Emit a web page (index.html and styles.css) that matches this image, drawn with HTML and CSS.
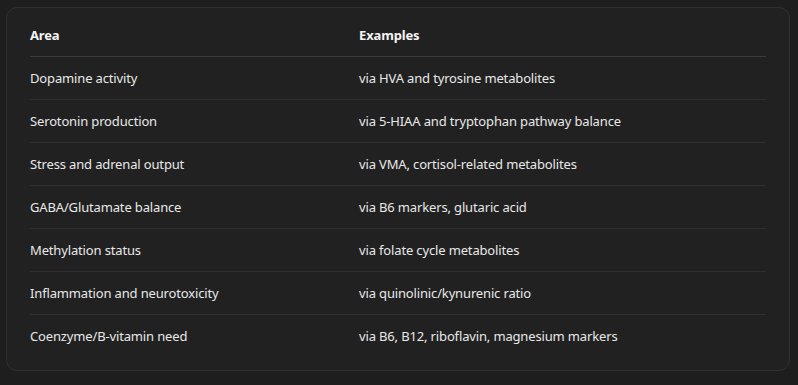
FILE: index.html
```html
<!DOCTYPE html>
<html lang="en">
<head>
<meta charset="utf-8">
<link rel="stylesheet" href="styles.css">
</head>
<body>
<div class="card">
  <table class="tbl">
    <thead>
      <tr><th>Area</th><th>Examples</th></tr>
    </thead>
    <tbody>
      <tr><td>Dopamine activity</td><td>via HVA and tyrosine metabolites</td></tr>
      <tr><td>Serotonin production</td><td>via 5-HIAA and tryptophan pathway balance</td></tr>
      <tr><td>Stress and adrenal output</td><td>via VMA, cortisol-related metabolites</td></tr>
      <tr><td>GABA/Glutamate balance</td><td>via B6 markers, glutaric acid</td></tr>
      <tr><td>Methylation status</td><td>via folate cycle metabolites</td></tr>
      <tr><td>Inflammation and neurotoxicity</td><td>via quinolinic/kynurenic ratio</td></tr>
      <tr><td>Coenzyme/B-vitamin need</td><td>via B6, B12, riboflavin, magnesium markers</td></tr>
    </tbody>
  </table>
</div>
</body>
</html>
```

FILE: styles.css
```css
html, body {
  margin: 0;
  padding: 0;
  background: #1e1e1e;
}
body {
  padding: 7px 8px 13px 6px;
  font-family: "Noto Sans", "Open Sans", sans-serif;
  color: #e8e8e8;
}
.card {
  background: #212121;
  border: 1px solid #303030;
  border-radius: 11px;
  padding: 12px 23px 12px 23px;
  height: 364px;
  box-sizing: border-box;
}
.tbl {
  width: 100%;
  border-collapse: collapse;
  font-size: 13px;
  letter-spacing: -0.15px;
}
.tbl th {
  text-align: left;
  font-weight: 700;
  height: 30px;
  padding: 0 0 6px 0;
  border-bottom: 1px solid #3a3a3a;
  color: #f4f4f4;
}
.tbl td {
  height: 42px;
  padding: 0;
  border-bottom: 1px solid #2e2e2e;
}
.tbl tr > :first-child {
  width: 329px;
}
.tbl tbody tr:last-child td {
  border-bottom: none;
}
```
